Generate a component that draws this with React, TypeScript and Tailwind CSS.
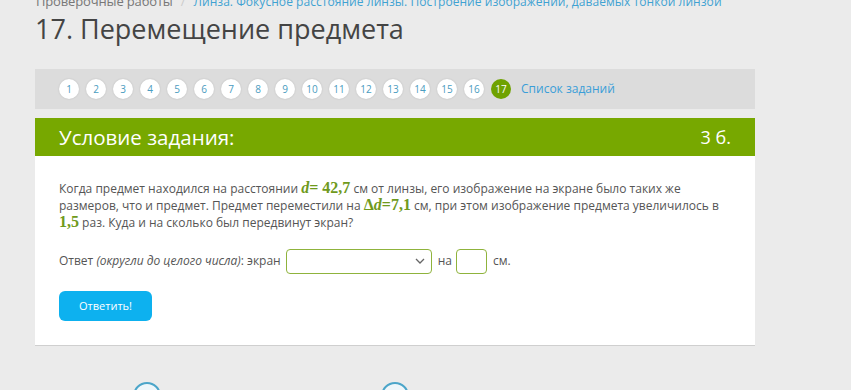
import React from 'react';

const Num: React.FC<{ children: React.ReactNode }> = ({ children }) => (
  <span className="font-bold text-[#6f9a1c] text-[16px] leading-[12px]" style={{ fontFamily: '"Liberation Serif", "DejaVu Serif", serif' }}>
    {children}
  </span>
);

const App: React.FC = () => {
  const steps = Array.from({ length: 16 }, (_, i) => i + 1);

  return (
    <div className="w-[851px] h-[390px] overflow-hidden bg-[#ebebeb] text-[#555]" style={{ fontFamily: '"Open Sans", "Noto Sans", sans-serif' }}>
      <div className="pl-[36px]">
        {/* хлебные крошки */}
        <div className="h-[18px] leading-[18px] -mt-[9px] whitespace-nowrap">
          <span className="text-[13px] tracking-[-0.15px] text-[#777]">Проверочные работы</span>
          <span className="text-[13px] text-[#ccc] mx-[8px]">/</span>
          <span className="text-[12px] tracking-[0.05px] text-[#3fa2d2]">Линза. Фокусное расстояние линзы. Построение изображений, даваемых тонкой линзой</span>
        </div>
        <h1 className="text-[27px] leading-[34px] text-[#444] mt-[3px] -ml-[1px]">17. Перемещение предмета</h1>
      </div>

      <div className="ml-[35px] w-[720px]">
        {/* навигация по заданиям */}
        <div className="mt-[23px] h-[40px] bg-[#dcdcdc] flex items-center pl-[24px] gap-[7px]">
          {steps.map((n) => (
            <div
              key={n}
              className="w-[20px] h-[20px] rounded-full bg-white shadow-[0_0_2px_rgba(0,0,0,0.15)] flex items-center justify-center text-[10px] text-[#4a9cc0]"
            >
              {n}
            </div>
          ))}
          <div className="w-[20px] h-[20px] rounded-full bg-[#6fa200] flex items-center justify-center text-[10px] text-white">
            17
          </div>
          <span className="ml-[3px] text-[12px] text-[#3a9ed8]">Список заданий</span>
        </div>

        {/* карточка задания */}
        <div className="mt-[9px] bg-white border-b border-[#cfcfcf]">
          <div className="h-[38px] bg-[#77a800] flex items-center justify-between px-[24px] text-white">
            <span className="text-[20.5px]">Условие задания:</span>
            <span className="text-[18px]">3 б.</span>
          </div>
          <div className="px-[24px] pt-[24px] pb-[24px]">
            <p className="text-[12px] leading-[17px] w-[670px]">
              Когда предмет находился на расстоянии <Num><i>d</i>= 42,7</Num> см от линзы, его изображение на экране было таких же
              размеров, что и предмет. Предмет переместили на <Num>Δ<i>d</i>=7,1</Num> см, при этом изображение предмета увеличилось в{' '}
              <Num>1,5</Num> раз. Куда и на сколько был передвинут экран?
            </p>
            <div className="mt-[18px] flex items-center text-[12px] h-[24px]">
              <span>
                Ответ <i>(округли до целого числа)</i>: экран
              </span>
              <div className="ml-[5px] w-[146px] h-[25px] border border-[#8fb33c] rounded-[4px] flex items-center justify-end pr-[6px]">
                <svg width="10" height="6" viewBox="0 0 10 6" fill="none" stroke="#666" strokeWidth="1.3">
                  <path d="M1 1l4 4 4-4" />
                </svg>
              </div>
              <span className="ml-[6px]">на</span>
              <div className="ml-[4px] w-[31px] h-[25px] border border-[#8fb33c] rounded-[4px]" />
              <span className="ml-[6px]">см.</span>
            </div>
            <button className="mt-[18px] w-[93px] h-[30px] rounded-[6px] bg-[#0db1ef] text-white text-[11px] flex items-center justify-center">
              Ответить!
            </button>
          </div>
        </div>

        {/* нижние иконки */}
        <div className="flex mt-[36px] pl-[98px] gap-[220px]">
          <div className="w-[28px] h-[28px] rounded-full border-2 border-[#4ba5c9] bg-[#eef6fa]" />
          <div className="w-[28px] h-[28px] rounded-full border-2 border-[#4ba5c9] bg-[#eef6fa]" />
        </div>
      </div>
    </div>
  );
};

export default App;
